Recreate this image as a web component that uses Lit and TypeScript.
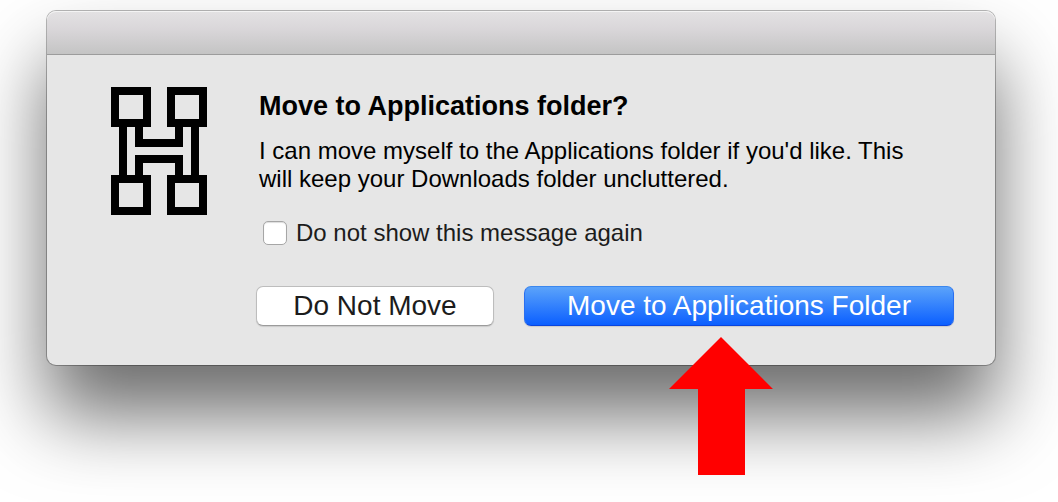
import { LitElement, html, css } from "lit";
import { customElement, state } from "lit/decorators.js";

@customElement("app-logo")
class AppLogo extends LitElement {
  static styles = css`
    :host { display: block; }
    .logo { display: block; width: 96px; height: 128px; }
  `;
  render() {
    return html`
      <svg class="logo" viewBox="0 0 12 16" fill="none" stroke="#000" shape-rendering="crispEdges" aria-hidden="true">
        <path d="M.5.5h4v4h-4zM7.500.5h4v4h-4zM.5 11.500h4v4h-4zM7.500 11.500h4v4h-4z" />
        <path d="M1.500 5v6M10.500 5v6M3.500 5v2h5V5M3.500 11V9h5v2" />
      </svg>
    `;
  }
}

@customElement("app-root")
class AppRoot extends LitElement {
  static styles = css`
    :host {
      display: block;
      box-sizing: border-box;
      min-height: 100vh;
      padding: 11px 63px 48px 47px;
      overflow: hidden;
      background: #fff;
      color: #000;
      font-family: "Liberation Sans", Arial, sans-serif;
    }
    .window {
      border-radius: 9px;
      background: #e6e6e6;
      box-shadow: 0 0 0 1px rgba(0, 0, 0, 0.28), 0 50px 78px rgba(0, 0, 0, 0.58);
    }
    .titlebar {
      box-sizing: border-box;
      height: 44px;
      border-bottom: 1px solid #9c9c9c;
      border-radius: 9px 9px 0 0;
      background: linear-gradient(#e3e2e3, #dad7da 40%, #c4c4c4);
      box-shadow: inset 0 1px 0 #f4f4f4;
    }
    .content {
      display: flex;
      align-items: flex-start;
      gap: 49px;
      padding: 32px 41px 39px 64px;
    }
    .main { flex: 1; min-width: 0; }
    .message { padding: 0 32px 0 3px; }
    h1 { margin: 0 0 12px; font-size: 27px; line-height: 38px; font-weight: 700; }
    p { margin: 0; font-size: 24px; line-height: 28px; }
    .suppress {
      display: flex;
      align-items: center;
      gap: 9px;
      margin-top: 26px;
      padding-left: 4px;
      color: #1c1c1c;
      font-size: 24px;
      line-height: 28px;
    }
    .suppress input {
      appearance: none;
      box-sizing: border-box;
      width: 24px;
      height: 24px;
      margin: 0;
      border: 1px solid #a6a6a6;
      border-radius: 5px;
      background: #fff;
      box-shadow: inset 0 1px 1px #ddd;
    }
    .suppress input:checked { background: #2f7ffb; }
    .actions { display: flex; gap: 30px; margin-top: 39px; }
    .slot { position: relative; }
    .slot.secondary { flex: 238; }
    .slot.primary { flex: 430; }
    button {
      display: block;
      box-sizing: border-box;
      width: 100%;
      height: 40px;
      padding: 0;
      border: 1px solid #bdbdbd;
      border-bottom-color: #9b9b9b;
      border-radius: 7px;
      background: #fff;
      box-shadow: 0 1px 1px rgba(0, 0, 0, 0.12);
      color: #1c1c1c;
      font-family: inherit;
      font-size: 28px;
      line-height: 36px;
      white-space: nowrap;
    }
    .primary button {
      border-color: #3b87ee #2a6ff0 #0a45dd;
      background: linear-gradient(#5ba3fa, #0b5fff);
      color: #fff;
    }
    .arrow {
      position: absolute;
      top: 51px;
      right: 181px;
      width: 104px;
      height: 138px;
      pointer-events: none;
    }
  `;

  @state() private suppress = false;

  render() {
    return html`
      <section class="window" role="dialog" aria-labelledby="title" aria-describedby="detail">
        <div class="titlebar"></div>
        <div class="content">
          <app-logo></app-logo>
          <div class="main">
            <div class="message">
              <h1 id="title">Move to Applications folder?</h1>
              <p id="detail">I can move myself to the Applications folder if you'd like. This will keep your Downloads folder uncluttered.</p>
              <label class="suppress">
                <input type="checkbox" .checked=${this.suppress}
                  @change=${(e: Event) => (this.suppress = (e.target as HTMLInputElement).checked)} />
                Do not show this message again
              </label>
            </div>
            <div class="actions">
              <div class="slot secondary"><button type="button">Do Not Move</button></div>
              <div class="slot primary">
                <button type="button">Move to Applications Folder</button>
                <svg class="arrow" viewBox="0 0 104 138" aria-hidden="true">
                  <path fill="#f00" d="M52 0 104 52H76V138H29V52H0z" />
                </svg>
              </div>
            </div>
          </div>
        </div>
      </section>
    `;
  }
}
